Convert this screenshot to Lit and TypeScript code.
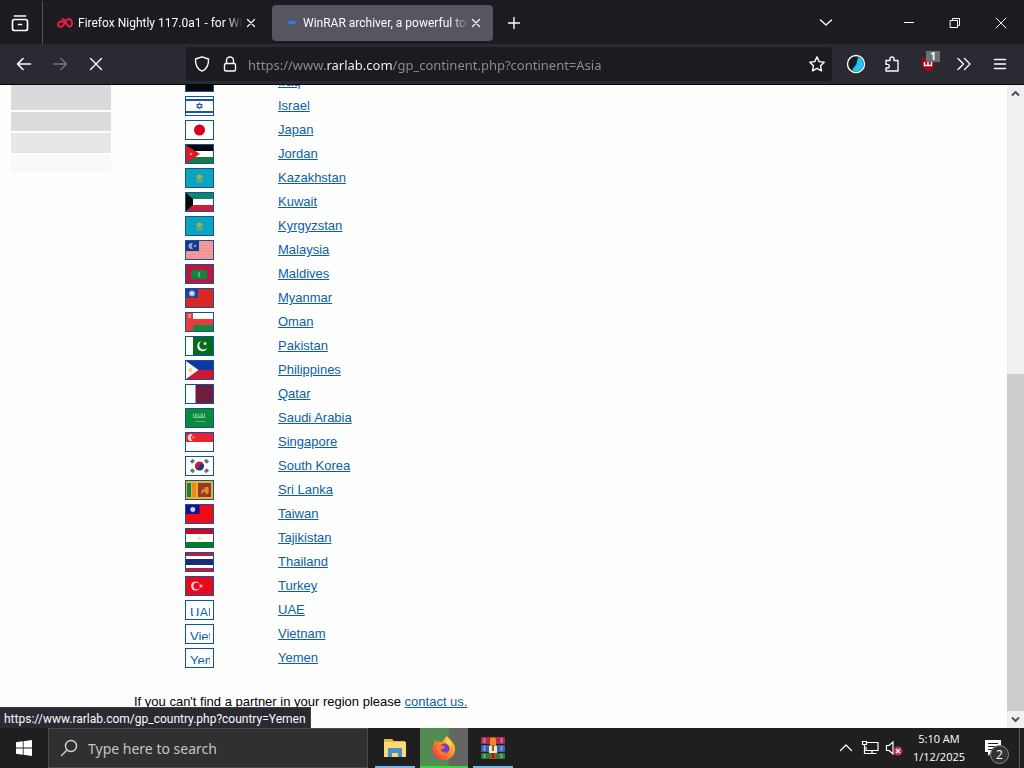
import { LitElement, html, svg, css } from "lit";
import type { TemplateResult, SVGTemplateResult } from "lit";
import { customElement } from "lit/decorators.js";

interface Country {
  name: string;
  flag?: SVGTemplateResult;
}

const star = (cx: number, cy: number, r: number, fill: string) => {
  const pts = Array.from({ length: 10 }, (_, i) => {
    const a = -Math.PI / 2 + (i * Math.PI) / 5;
    const q = i % 2 ? r * 0.42 : r;
    return `${(cx + q * Math.cos(a)).toFixed(2)},${(cy + q * Math.sin(a)).toFixed(2)}`;
  }).join(" ");
  return svg`<polygon points=${pts} fill=${fill} />`;
};

const bands = (...rows: [number, string][]) => {
  let y = 0;
  return rows.map(([h, c]) => {
    const r = svg`<rect x="0" y=${y} width="27" height=${h} fill=${c} />`;
    y += h;
    return r;
  });
};

const sunFlag = svg`<rect width="27" height="18" fill="#0aa3c0"/>
  <circle cx="13.5" cy="8" r="2.8" fill="#8cb45c"/>
  <path d="M9 9.500q4.500 4 9 0q-1.500 4.500-4.500 4.500t-4.500-4.500z" fill="#5fae80"/>`;

const countries: Country[] = [
  { name: "Iraq", flag: svg`${bands([6, "#ce1126"], [6, "#fff"], [6, "#06080c"])}` },
  {
    name: "Israel",
    flag: svg`<rect width="27" height="18" fill="#fff"/><rect y="2" width="27" height="2" fill="#1c4fc0"/><rect y="14" width="27" height="2" fill="#1c4fc0"/>
      <path d="M13.500 5.800l2.800 4.700h-5.600zM13.500 12.200l2.800-4.700h-5.600z" fill="none" stroke="#1c4fc0" stroke-width=".9"/>`,
  },
  { name: "Japan", flag: svg`<rect width="27" height="18" fill="#fff"/><circle cx="13.500" cy="9" r="5.500" fill="#d8001f"/>` },
  {
    name: "Jordan",
    flag: svg`${bands([6, "#06080c"], [6, "#fff"], [6, "#157a43"])}<path d="M0 0L14 9L0 18z" fill="#d61a2c"/>${star(5, 9, 1.8, "#f3a0a8")}`,
  },
  { name: "Kazakhstan", flag: sunFlag },
  { name: "Kuwait", flag: svg`${bands([6, "#16826b"], [6, "#fff"], [6, "#d01c36"])}<path d="M0 0L7 6V12L0 18z" fill="#06080c"/>` },
  { name: "Kyrgyzstan", flag: sunFlag },
  {
    name: "Malaysia",
    flag: svg`<rect width="27" height="18" fill="#f39c98"/>${[1, 4, 7, 10, 13, 16].map((y) => svg`<rect y=${y} width="27" height="1" fill="#ee8f90"/>`)}
      <rect width="13" height="10" fill="#17388f"/><path d="M7 2.500a3 3 0 1 0 0 5a3.200 3.200 0 0 1 0-5z" fill="#8ea4cc"/>${star(9, 5, 2, "#8ea4cc")}`,
  },
  {
    name: "Maldives",
    flag: svg`<rect width="27" height="18" fill="#c01440"/><rect x="5" y="5" width="16" height="9" fill="#0d8440"/><path d="M15 6.500a3 3 0 1 0 0 6a3.600 3.600 0 0 1 0-6z" fill="#7cc47e"/>`,
  },
  { name: "Myanmar", flag: svg`<rect width="27" height="18" fill="#dc2620"/><rect width="12" height="9" fill="#21409c"/><circle cx="6" cy="4.500" r="3" fill="#7f9de6"/>${star(6, 4.5, 3.2, "#dde6ff")}` },
  {
    name: "Oman",
    flag: svg`${bands([6, "#fff"], [6, "#ea3b3b"], [6, "#158a3c"])}<rect width="7" height="18" fill="#ea3b3b"/><path d="M2 1l3 4M5 1L2 5M3.500 1v4" stroke="#f6b4b4" stroke-width=".8"/>`,
  },
  {
    name: "Pakistan",
    flag: svg`<rect width="27" height="18" fill="#046a1c"/><rect width="7" height="18" fill="#fff"/><path d="M15.500 4.200a5 5 0 1 0 5.600 6.500a4.400 4.400 0 1 1-5.600-6.500z" fill="#fff"/>${star(19, 6.5, 2.2, "#fff")}`,
  },
  {
    name: "Philippines",
    flag: svg`<rect width="27" height="9" fill="#0a3aa6"/><rect y="9" width="27" height="9" fill="#d0182c"/><path d="M0 0L12.500 9L0 18z" fill="#fff"/><circle cx="4.500" cy="9" r="2" fill="#f0d46c"/>`,
  },
  { name: "Qatar", flag: svg`<rect width="27" height="18" fill="#701c3c"/><path d="M0 0H9l1 1-1 1 1 1-1 1 1 1-1 1 1 1-1 1 1 1-1 1 1 1-1 1 1 1-1 1 1 1-1 1 1 1-1 1H0z" fill="#fff"/>` },
  {
    name: "Saudi Arabia",
    flag: svg`<rect width="27" height="18" fill="#098a3c"/><path d="M7.500 4.500v4M9.500 5v3.500M11 4v4M13 5v3h2V4M16.500 5v3.500M18.500 4v4.500M7 8.500h12.500" stroke="#7cc890" stroke-width="1" fill="none"/><path d="M9 12.500h10" stroke="#5cb478"/>`,
  },
  {
    name: "Singapore",
    flag: svg`${bands([9, "#ea2330"], [9, "#fff"])}<path d="M6.500 1.300a3.500 3.500 0 1 0 0 6.400a4 4 0 0 1 0-6.400z" fill="#ffd9dc"/><circle cx="7.500" cy="4.500" r="1.300" fill="#f27c84"/>`,
  },
  {
    name: "South Korea",
    flag: svg`<rect width="27" height="18" fill="#fff"/><path d="M9 9a4.500 4.500 0 0 1 9 0z" fill="#cf1737"/><path d="M9 9a4.500 4.500 0 0 0 9 0z" fill="#173a86"/><circle cx="11.250" cy="9" r="2.250" fill="#cf1737"/><circle cx="15.750" cy="9" r="2.250" fill="#173a86"/>
      <path d="M5 5.500l3-2.500M19 3l3 2.500M5 12.500l3 2.500M19 15l3-2.500" stroke="#66746c" stroke-width="3.400"/>`,
  },
  {
    name: "Sri Lanka",
    flag: svg`<rect width="27" height="18" fill="#eab22c"/><rect x="1" y="2" width="4" height="14" fill="#138050"/><rect x="6" y="2" width="4" height="14" fill="#ee8a1e"/><rect x="12" y="2" width="13" height="14" fill="#963a24"/><path d="M15 13l1-5 2 1 1-3 3 0 1 3-1 4h-2l-1-2-2 0-1 2z" fill="#e68a32"/>`,
  },
  { name: "Taiwan", flag: svg`<rect width="27" height="18" fill="#f20a16"/><rect width="13.500" height="9" fill="#12128e"/><circle cx="6.750" cy="4.500" r="2.300" fill="#fff"/><path d="M6.750 1.500v6M3.750 4.500h6M4.700 2.400l4.200 4.200M8.900 2.400l-4.200 4.200" stroke="#b8bcf4" stroke-width=".6"/>` },
  { name: "Tajikistan", flag: svg`${bands([5, "#c80a24"], [8, "#fff"], [5, "#087c20"])}<path d="M11.500 10.500V8l1 1 1-2 1 2 1-1v2.500z" fill="#f0dc90"/>` },
  { name: "Thailand", flag: svg`${bands([3, "#c4193c"], [3, "#fff"], [6, "#1a2c74"], [3, "#fff"], [3, "#c4193c"])}` },
  { name: "Turkey", flag: svg`<rect width="27" height="18" fill="#e60a1c"/><circle cx="9.500" cy="9" r="4.500" fill="#fbd0d0"/><circle cx="10.700" cy="9" r="3.300" fill="#e60a1c"/>${star(15, 9, 2.4, "#fbd0d0")}` },
  { name: "UAE" },
  { name: "Vietnam" },
  { name: "Yemen" },
];

const icon = (size: number, body: SVGTemplateResult): TemplateResult =>
  html`<svg width=${size} height=${size} viewBox="0 0 ${size} ${size}" fill="none" stroke="currentColor" stroke-width="1.4" stroke-linecap="round" stroke-linejoin="round" aria-hidden="true">${body}</svg>`;

const closeIcon = icon(10, svg`<path d="M1.500 1.500l7 7M8.500 1.500l-7 7" stroke-width="1.200"/>`);

@customElement("browser-tabs")
class BrowserTabs extends LitElement {
  static styles = css`
    :host { display: flex; box-sizing: border-box; height: 44px; padding-top: 1px; background: #1c1b22; color: #fbfbfe; font: 12px/20px Roboto, "Open Sans", sans-serif; }
    button { display: grid; place-items: center; padding: 0; border: 0; background: none; color: inherit; }
    svg { display: block; }
    .view { width: 43px; padding-right: 2px; border-right: 1px solid #55545c; }
    .tabs { display: flex; align-items: center; gap: 2px; padding-left: 7px; }
    .tab { display: flex; align-items: center; box-sizing: border-box; width: 220px; height: 36px; padding-left: 7px; border-radius: 4px; }
    .tab.active { width: 221px; padding-left: 8px; background: #57555f; }
    .fav { width: 16px; margin-right: 5px; }
    .title { width: 165px; overflow: hidden; white-space: nowrap; -webkit-mask-image: linear-gradient(to left, transparent, #000 16px); mask-image: linear-gradient(to left, transparent, #000 16px); }
    .active .fav { margin-right: 7px; }
    .close { width: 16px; height: 20px; }
    .new { width: 42px; }
    .spacer { flex: 1; }
    .list { width: 36px; margin-right: 42px; }
    .win { width: 46px; }
  `;

  render() {
    return html`
      <button class="view" aria-label="Firefox View">
        ${icon(18, svg`<rect x="1.500" y="5.500" width="15" height="11" rx="2" stroke-width="1.700"/><path d="M3.500 2h11M7.500 10.500h3" stroke-width="1.700"/>`)}
      </button>
      <div class="tabs">
        <div class="tab">
          <svg class="fav" width="16" height="16" viewBox="0 0 16 16" fill="none" stroke="#dd2140" stroke-width="2" stroke-linecap="round" stroke-linejoin="round" aria-hidden="true"><path d="M6.500 7C4 5.500 1 7 1 9.500s3.500 3.500 5.500.7S8.500 4 11.500 4 15 6.500 15 8.500 13.500 12 11.800 11.500C9 10.500 9.500 4.500 5.500 4"/></svg>
          <span class="title">Firefox Nightly 117.0a1 - for Win</span>
          <button class="close" aria-label="Close tab">${closeIcon}</button>
        </div>
        <div class="tab active">
          <svg class="fav" width="16" height="16" viewBox="0 0 16 16" aria-hidden="true"><rect x="8" y="6" width="8" height="3" rx="1.500" fill="#2d7fe0"/></svg>
          <span class="title">WinRAR archiver, a powerful too</span>
          <button class="close" aria-label="Close tab">${closeIcon}</button>
        </div>
      </div>
      <button class="new" aria-label="New tab">${icon(14, svg`<path d="M7 1.500v11M1.500 7h11"/>`)}</button>
      <div class="spacer"></div>
      <button class="list" aria-label="List all tabs">${icon(14, svg`<path d="M1.500 4L7 9l5.500-5"/>`)}</button>
      <button class="win" aria-label="Minimize">${icon(10, svg`<path d="M0 4.500h10" stroke-width="1"/>`)}</button>
      <button class="win" aria-label="Restore">${icon(12, svg`<path d="M1.500 3.500h7v7h-7zM3.500 3V1.500h7v7H9" stroke-width="1" stroke-linejoin="miter"/>`)}</button>
      <button class="win" aria-label="Close">${icon(12, svg`<path d="M1 1l10 10M11 1L1 11" stroke-width="1"/>`)}</button>
    `;
  }
}

@customElement("browser-toolbar")
class BrowserToolbar extends LitElement {
  static styles = css`
    :host { display: flex; align-items: center; height: 40px; padding: 0 6px; background: #2b2a33; color: #fbfbfe; border-bottom: 1px solid #08080c; font: 13px/20px "Noto Sans", "Open Sans", sans-serif; }
    button { display: grid; place-items: center; width: 36px; height: 32px; padding: 0; border: 0; background: none; color: inherit; position: relative; }
    svg { display: block; }
    .off { color: #76757d; }
    .bar { flex: 1; display: flex; align-items: center; height: 34px; margin: 0 6px 0 72px; padding: 0 1px 0 2px; background: #1c1b22; border-radius: 4px; }
    .bar button { width: 28px; }
    .url { flex: 1; min-width: 0; height: 28px; margin-left: 4px; padding: 2px 0 0; border: 0; outline: 0; font: inherit; color: #8f8e96; background: linear-gradient(to right, #8f8e96 78px, #fbfbfe 78px 144px, #8f8e96 144px); -webkit-background-clip: text; background-clip: text; -webkit-text-fill-color: transparent; }
    .badge { position: absolute; top: 3px; right: 6px; width: 14px; height: 11px; background: #69706f; font: bold 10px/11px "Open Sans", sans-serif; }
  `;

  render() {
    return html`
      <button aria-label="Back">${icon(16, svg`<path d="M1.500 8h13M7 2.500L1.500 8 7 13.500" stroke-width="1.600"/>`)}</button>
      <button class="off" aria-label="Forward">${icon(16, svg`<path d="M1.500 8h13M9 2.500L14.500 8 9 13.500"/>`)}</button>
      <button aria-label="Stop">${icon(16, svg`<path d="M2.500 2.500l11 11M13.500 2.500l-11 11"/>`)}</button>
      <div class="bar">
        <button aria-label="Tracking protection">${icon(16, svg`<path d="M8 .8L14.500 3c.3 5.500-1.500 10-6.500 12.200C3 13 1.200 8.500 1.500 3z"/>`)}</button>
        <button aria-label="Site information">${icon(16, svg`<rect x="2.500" y="7.500" width="11" height="7.500" rx="1.500"/><path d="M4.500 7V4.500a3.500 3.500 0 0 1 7 0V7"/>`)}</button>
        <input class="url" type="text" aria-label="Address" spellcheck="false" value="https://www.rarlab.com/gp_continent.php?continent=Asia" />
        <button aria-label="Bookmark this page">${icon(16, svg`<path d="M8 .9l2.200 4.700 5 .6-3.700 3.500 1 5.100L8 12.300l-4.500 2.500 1-5.100L.8 6.200l5-.6z"/>`)}</button>
      </div>
      <button aria-label="Dark Reader">
        <svg width="20" height="20" viewBox="0 0 20 20" aria-hidden="true"><circle cx="10" cy="10" r="8.500" fill="#141c28" stroke="#fff" stroke-width="1.400"/><path d="M12 3A7.300 7.300 0 1 1 6 16L10.500 10z" fill="#1cc8f0"/></svg>
      </button>
      <button aria-label="Extensions">${icon(16, svg`<path d="M2 4.500h4V3a2 2 0 0 1 4 0v1.500h4V15H2v-3h1.500a1.800 1.800 0 0 0 0-3.600H2z"/>`)}</button>
      <button aria-label="uBlock Origin">
        <svg width="16" height="16" viewBox="0 0 16 16" aria-hidden="true"><path d="M8 0L14.500 2.500v5C14.500 11.500 12 14.500 8 16 4 14.500 1.500 11.500 1.500 7.500v-5z" fill="#a00818"/><path d="M4.500 6v3.500h7V6M8 6v3.500" fill="none" stroke="#fff" stroke-width="1.400"/></svg>
        <span class="badge">1</span>
      </button>
      <button aria-label="More tools">${icon(16, svg`<path d="M2 2.500L7.500 8 2 13.500M8.500 2.500L14 8l-5.500 5.500"/>`)}</button>
      <button aria-label="Menu">${icon(14, svg`<path d="M1.500 2.500h11M1.500 7h11M1.500 11.500h11" stroke-width="1.500"/>`)}</button>
    `;
  }
}

@customElement("partner-page")
class PartnerPage extends LitElement {
  static styles = css`
    :host { position: relative; flex: 1; min-height: 0; display: flex; background: #fefefe; font: 13px/24px "Liberation Sans", Arial, sans-serif; color: #000; }
    a { color: #0b5ea8; }
    .view { flex: 1; display: flex; flex-direction: column; justify-content: flex-end; overflow: hidden; }
    .doc { display: flex; flex-shrink: 0; }
    .menu { display: flex; flex-direction: column; gap: 2px; width: 100px; margin: 0 23px 0 11px; }
    .item { height: 19px; background: #dcdcdc; }
    .item.first { height: 40px; background: #dadada; }
    .item.last { height: 20px; background: #e7e7e7; }
    .item.tail { height: 18px; background: #f9f9f9; }
    .row { display: grid; grid-template-columns: 93px auto; align-items: center; height: 24px; padding-left: 51px; }
    .flag { box-sizing: border-box; display: block; width: 29px; height: 20px; border: 1px solid #0d559c; overflow: hidden; text-decoration: none; }
    .flag svg { display: block; }
    .alt { display: block; height: 12px; margin: 3px 3px 3px 4px; overflow: hidden; line-height: 18px; }
    .note { margin: 20px 0 14px; }
    .scroll { display: flex; flex-direction: column; width: 17px; background: #f0f0f0; color: #505050; }
    .scroll button { display: grid; place-items: center; height: 17px; padding: 0; border: 0; background: none; color: inherit; }
    .track { flex: 272; }
    .thumb { flex: 337; background: #cdcdcd; }
    .status { position: absolute; left: 0; bottom: 0; box-sizing: border-box; height: 21px; padding: 1px 4px 0; background: #2b2a33; color: #fbfbfe; border: 1px solid #3d3c45; border-width: 1px 1px 0 0; font: 12px/20px Roboto, "Open Sans", sans-serif; }
  `;

  private row(c: Country) {
    const href = `#${c.name}`;
    return html`<div class="row">
      <a class="flag" href=${href} aria-label=${c.name}>
        ${c.flag ? html`<svg width="27" height="18" viewBox="0 0 27 18" aria-hidden="true">${c.flag}</svg>` : html`<span class="alt">${c.name}</span>`}
      </a>
      <span><a href=${href}>${c.name}</a></span>
    </div>`;
  }

  render() {
    return html`
      <main class="view">
        <div class="doc">
          <div class="menu">
            <div class="item first"></div>
            <div class="item"></div>
            <div class="item last"></div>
            <div class="item tail"></div>
          </div>
          <div>
            ${countries.map((c) => this.row(c))}
            <p class="note">If you can't find a partner in your region please <a href="#contact">contact us.</a></p>
          </div>
        </div>
      </main>
      <div class="scroll">
        <button aria-label="Scroll up">${icon(9, svg`<path d="M1 6.500L4.500 3 8 6.500" stroke-width="2" stroke-linecap="butt"/>`)}</button>
        <div class="track"></div>
        <div class="thumb"></div>
        <button aria-label="Scroll down">${icon(9, svg`<path d="M1 2.500L4.500 6 8 2.500" stroke-width="2" stroke-linecap="butt"/>`)}</button>
      </div>
      <div class="status">https://www.rarlab.com/gp_country.php?country=Yemen</div>
    `;
  }
}

@customElement("task-bar")
class TaskBar extends LitElement {
  static styles = css`
    :host { display: flex; height: 40px; background: #1f1f1f; color: #fff; font: 12px/18px "Open Sans", "Noto Sans", sans-serif; }
    button { display: grid; place-items: center; padding: 0; border: 0; background: none; color: inherit; font: inherit; position: relative; }
    svg { display: block; }
    .start { width: 48px; }
    .search { box-sizing: border-box; display: flex; align-items: center; gap: 10px; width: 320px; padding-left: 11px; background: #303030; border: 1px solid #4c4c4c; color: #d4d4d4; }
    .search input { flex: 1; min-width: 0; padding: 2px 0 0; border: 0; outline: 0; background: none; font: 14px/20px "Noto Sans", "Open Sans", sans-serif; color: #fff; }
    .search input::placeholder { color: #c4c4c4; opacity: 1; }
    .apps { display: flex; gap: 1px; padding-left: 3px; }
    .app { width: 48px; background: linear-gradient(#76b9ed, #76b9ed) center bottom / 40px 2px no-repeat; }
    .app.current { background: linear-gradient(#35dd3c, #35dd3c) center bottom / 48px 2px no-repeat, linear-gradient(to right, #548a54 28px, #646664 30px); }
    .spacer { flex: 1; }
    .tray { width: 24px; }
    .clock { width: 54px; margin-left: 6px; font-size: 11px; text-align: center; }
    .notes { width: 53px; }
    .count { position: absolute; left: 24px; top: 17px; box-sizing: border-box; width: 19px; height: 19px; border: 1px solid #8a8a8a; border-radius: 50%; background: #333; font-size: 12px; line-height: 17px; }
    .edge { width: 4px; border-left: 1px solid #5a5a5a; }
  `;

  render() {
    return html`
      <button class="start" aria-label="Start">
        <svg width="16" height="16" viewBox="0 0 16 16" fill="#fff" aria-hidden="true"><path d="M0 2.200l6.800-.9v6.300H0zM7.600 1.200L16 0v7.600H7.600zM0 8.400h6.800v6.300L0 13.800zM7.600 8.400H16V16l-8.400-1.200z"/></svg>
      </button>
      <label class="search">
        ${icon(18, svg`<circle cx="11" cy="7" r="5.500"/><path d="M7 11L1.500 16.500"/>`)}
        <input type="text" placeholder="Type here to search" aria-label="Type here to search" />
      </label>
      <div class="apps">
        <button class="app" aria-label="File Explorer">
          <svg width="24" height="24" viewBox="0 0 24 24" aria-hidden="true"><path d="M1 3h8l2 2h11v16H1z" fill="#e8b63a"/><path d="M1 6h22v15H1z" fill="#fbda75"/><path d="M5 21v-8q0-1 1-1h12q1 0 1 1v8h-4v-4H9v4z" fill="#4a8fc8"/></svg>
        </button>
        <button class="app current" aria-label="Firefox Nightly">
          <svg width="24" height="24" viewBox="0 0 24 24" aria-hidden="true">
            <defs><linearGradient id="fx" x1="1" y1="0" x2="0" y2="1"><stop offset="0" stop-color="#ffe24c"/><stop offset=".45" stop-color="#ff9126"/><stop offset="1" stop-color="#ee1f52"/></linearGradient></defs>
            <path d="M15 0c1 2 3 3 5 5.500 2.500 3 3.800 6 2.800 10C21.500 21 17 24 12 24 5 24 .5 19 .6 13 .7 9 2 6 4.500 3.500L5 6c2-.8 4-.5 5 .5 1-3 3-4.500 5-6.500z" fill="url(#fx)"/>
            <circle cx="12.500" cy="12.500" r="5" fill="#7542c5"/><path d="M5 10c3-2 6 0 8 .5-.5 2-3 2-4 3s2 3.500 5 2.500c-1 3-6 3.500-8 .5-1.400-2-1.500-4-1-6.500z" fill="#ff7a2a"/><path d="M15 2c3 3 5 6 4 11-1-3-2-4-4-5.500S13.500 4 15 2z" fill="#ffd740"/>
          </svg>
        </button>
        <button class="app" aria-label="WinRAR">
          <svg width="26" height="24" viewBox="0 0 26 24" aria-hidden="true">
            <rect x="1" y="1" width="24" height="7" rx="1" fill="#b02a4c"/><rect x="1" y="9" width="24" height="7" rx="1" fill="#3b60b4"/><rect x="1" y="17" width="24" height="6" rx="1" fill="#2d7a36"/>
            <path d="M4.500 2v5M21.500 2v5M4.500 10v5M21.500 10v5M4.500 18v4M21.500 18v4" stroke="#ffffff60" stroke-width="2"/>
            <rect x="10" y="1" width="6" height="22" fill="#b8481c"/><path d="M10 3q3-3 6 0v7h-6z" fill="#ee8a25"/><rect x="9" y="10" width="8" height="7" fill="#f4e7d0"/><path d="M12 9h2v6h-2z" fill="#a0582a"/><path d="M12 17h2v5h-2z" fill="#6e2c18"/>
          </svg>
        </button>
      </div>
      <div class="spacer"></div>
      <button class="tray" aria-label="Show hidden icons">${icon(14, svg`<path d="M1.500 9.500L7 4l5.500 5.500" stroke-width="1.300"/>`)}</button>
      <button class="tray" aria-label="Network">${icon(18, svg`<path d="M6 3.500h11v8H5V8M11 11.500v3M7 14.500h8M1.500 2.500h4v3h-4zM3.500 5.500v9H7" stroke-width="1.200" stroke-linejoin="miter"/>`)}</button>
      <button class="tray" aria-label="Volume muted">
        <svg width="18" height="16" viewBox="0 0 18 16" aria-hidden="true"><path d="M1.500 5.500h2.500L8 2v12L4 10.500H1.500z" fill="none" stroke="#fff" stroke-width="1.200"/><circle cx="13" cy="11" r="4.500" fill="#c8304a"/><path d="M11 9l4 4M15 9l-4 4" stroke="#fff" stroke-width="1.200"/></svg>
      </button>
      <button class="clock"><span>5:10 AM<br />1/12/2025</span></button>
      <button class="notes" aria-label="Notifications">
        <svg width="18" height="18" viewBox="0 0 18 18" aria-hidden="true"><path d="M1 1h16v12H8l-4 4v-4H1z" fill="#fff"/><path d="M4 4.500h10M4 7.500h10M4 10.500h6" stroke="#1f1f1f"/></svg>
        <span class="count">2</span>
      </button>
      <div class="edge"></div>
    `;
  }
}

@customElement("app-root")
class AppRoot extends LitElement {
  static styles = css`
    :host { display: flex; flex-direction: column; height: 100vh; overflow: hidden; }
    browser-tabs, browser-toolbar, task-bar { flex-shrink: 0; }
  `;

  render() {
    return html`
      <browser-tabs></browser-tabs>
      <browser-toolbar></browser-toolbar>
      <partner-page></partner-page>
      <task-bar></task-bar>
    `;
  }
}
